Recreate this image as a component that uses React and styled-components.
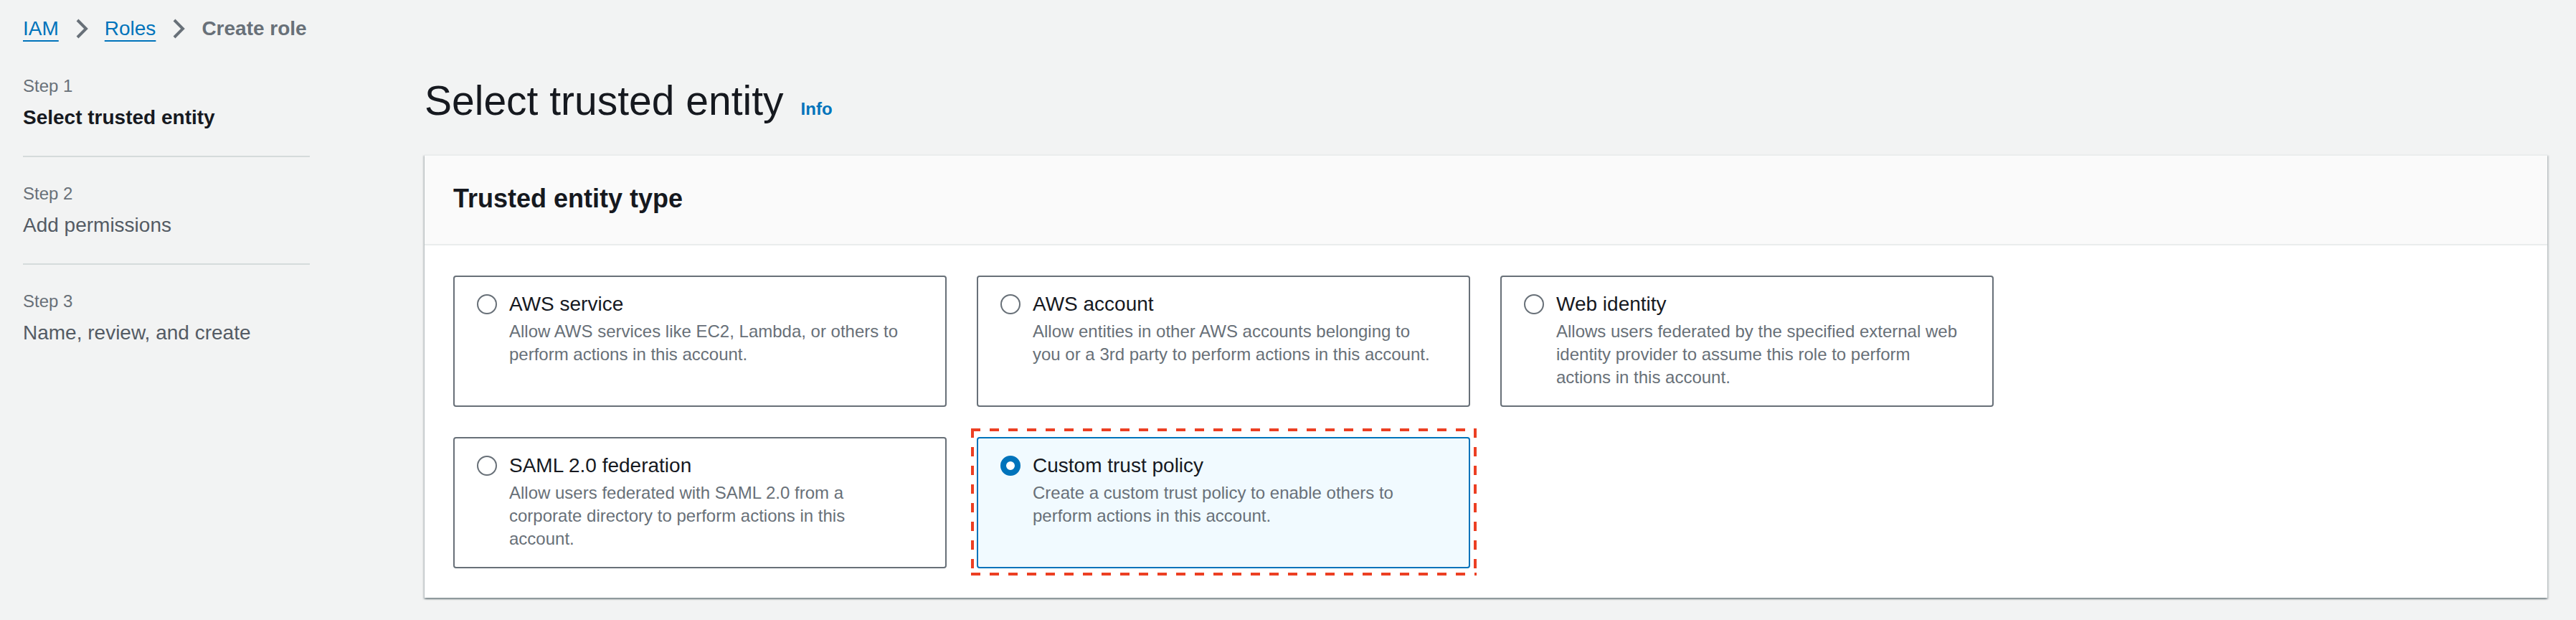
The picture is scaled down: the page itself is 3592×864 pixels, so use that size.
import React from "react";
import styled, { createGlobalStyle } from "styled-components";

const GlobalStyle = createGlobalStyle`
  html, body {
    margin: 0;
    padding: 0;
    background: #f2f3f3;
  }
  body {
    font-family: "Liberation Sans", Arial, sans-serif;
    color: #16191f;
  }
  * {
    box-sizing: border-box;
  }
`;

const Page = styled.div`
  min-height: 864px;
  padding: 20px 40px 0 32px;
`;

const Breadcrumbs = styled.nav`
  display: flex;
  align-items: center;
  height: 40px;
  font-size: 28px;
  line-height: 40px;
`;

const Crumb = styled.a`
  color: #0073bb;
  text-decoration: underline;
  text-decoration-thickness: 2px;
  text-underline-offset: 7px;
  cursor: pointer;
`;

const CurrentCrumb = styled.span`
  color: #687078;
  font-weight: 700;
`;

const ChevronIcon = styled.svg`
  flex: none;
  margin: 0 22px;
`;

const Layout = styled.div`
  display: grid;
  grid-template-columns: 400px 1fr;
  column-gap: 160px;
  margin-top: 44px;
`;

const Steps = styled.ol`
  list-style: none;
  margin: 0;
  padding: 0;
`;

const Step = styled.li`
  & + & {
    margin-top: 33px;
    padding-top: 35px;
    border-top: 2px solid #d5dbdb;
  }
`;

const StepLabel = styled.div`
  font-size: 24px;
  line-height: 32px;
  color: #687078;
`;

const StepName = styled.div`
  margin-top: 8px;
  font-size: 28px;
  line-height: 40px;
  font-weight: ${(p) => (p.$active ? 700 : 400)};
  color: ${(p) => (p.$active ? "#16191f" : "#545b64")};
`;

const Main = styled.main`
  min-width: 0;
`;

const Title = styled.h1`
  margin: 0 0 39px;
  font-size: 57px;
  line-height: 72px;
  font-weight: 400;
  color: #16191f;
`;

const InfoLink = styled.a`
  margin-left: 24px;
  font-size: 24px;
  line-height: 32px;
  font-weight: 700;
  color: #0073bb;
  text-decoration: none;
  cursor: pointer;
`;

const Panel = styled.section`
  background: #fff;
  border-top: 2px solid #eaeded;
  box-shadow: 0 2px 2px 0 rgba(0, 28, 36, 0.3),
    2px 2px 2px 0 rgba(0, 28, 36, 0.15), -2px 2px 2px 0 rgba(0, 28, 36, 0.15);
`;

const PanelHeader = styled.div`
  background: #fafafa;
  padding: 36px 40px 39px;
  border-bottom: 2px solid #eaeded;
`;

const PanelTitle = styled.h2`
  margin: 0;
  font-size: 36px;
  line-height: 48px;
  font-weight: 700;
  color: #16191f;
`;

const PanelBody = styled.div`
  padding: 42px 40px 41px;
`;

const TileGrid = styled.div`
  display: grid;
  grid-template-columns: repeat(3, 688px);
  gap: 42px;
`;

const dash = (dir) =>
  `repeating-linear-gradient(${dir}, #ec3f23 0 13px, transparent 13px 26px)`;

const Tile = styled.label`
  position: relative;
  display: flex;
  gap: 17px;
  padding: 18px 46px 23px 31px;
  border: 2px solid ${(p) => (p.$selected ? "#0073bb" : "#687078")};
  border-radius: 4px;
  background: ${(p) => (p.$selected ? "#f1faff" : "#fff")};
  cursor: pointer;

  ${(p) =>
    p.$highlight &&
    `
    &::after {
      content: "";
      position: absolute;
      top: -14px;
      left: -10px;
      right: -11px;
      bottom: -12px;
      background:
        ${dash("90deg")} left top / 100% 4px no-repeat,
        ${dash("90deg")} left bottom / 100% 4px no-repeat,
        ${dash("180deg")} left top / 4px 100% no-repeat,
        ${dash("180deg")} right top / 4px 100% no-repeat;
      pointer-events: none;
    }
  `}
`;

const Radio = styled.span`
  flex: none;
  width: 28px;
  height: 28px;
  margin-top: 6px;
  border-radius: 50%;
  background: #fff;
  border: ${(p) => (p.$checked ? "8.5px solid #0073bb" : "2.5px solid #687078")};
`;

const TileText = styled.div`
  flex: 1;
  min-width: 0;
`;

const TileTitle = styled.div`
  font-size: 28px;
  line-height: 40px;
  color: #16191f;
`;

const TileDesc = styled.div`
  margin-top: 2px;
  font-size: 24px;
  line-height: 32px;
  color: #687078;
`;

const Chevron = () => (
  <ChevronIcon width="20" height="28" viewBox="0 0 20 28">
    <polyline
      points="4,2 16,14 4,26"
      fill="none"
      stroke="#687078"
      strokeWidth="4"
      strokeLinejoin="miter"
    />
  </ChevronIcon>
);

const steps = [
  { label: "Step 1", name: "Select trusted entity", active: true },
  { label: "Step 2", name: "Add permissions" },
  { label: "Step 3", name: "Name, review, and create" },
];

const entityTypes = [
  {
    title: "AWS service",
    desc: "Allow AWS services like EC2, Lambda, or others to perform actions in this account.",
  },
  {
    title: "AWS account",
    desc: "Allow entities in other AWS accounts belonging to you or a 3rd party to perform actions in this account.",
  },
  {
    title: "Web identity",
    desc: "Allows users federated by the specified external web identity provider to assume this role to perform actions in this account.",
  },
  {
    title: "SAML 2.0 federation",
    desc: "Allow users federated with SAML 2.0 from a corporate directory to perform actions in this account.",
  },
  {
    title: "Custom trust policy",
    desc: "Create a custom trust policy to enable others to perform actions in this account.",
    selected: true,
  },
];

const App = () => {
  return (
    <Page>
      <GlobalStyle />
      <Breadcrumbs>
        <Crumb>IAM</Crumb>
        <Chevron />
        <Crumb>Roles</Crumb>
        <Chevron />
        <CurrentCrumb>Create role</CurrentCrumb>
      </Breadcrumbs>

      <Layout>
        <Steps>
          {steps.map((s) => (
            <Step key={s.label}>
              <StepLabel>{s.label}</StepLabel>
              <StepName $active={s.active}>{s.name}</StepName>
            </Step>
          ))}
        </Steps>

        <Main>
          <Title>
            Select trusted entity
            <InfoLink>Info</InfoLink>
          </Title>

          <Panel>
            <PanelHeader>
              <PanelTitle>Trusted entity type</PanelTitle>
            </PanelHeader>
            <PanelBody>
              <TileGrid>
                {entityTypes.map((t) => (
                  <Tile key={t.title} $selected={t.selected} $highlight={t.selected}>
                    <Radio $checked={t.selected} />
                    <TileText>
                      <TileTitle>{t.title}</TileTitle>
                      <TileDesc>{t.desc}</TileDesc>
                    </TileText>
                  </Tile>
                ))}
              </TileGrid>
            </PanelBody>
          </Panel>
        </Main>
      </Layout>
    </Page>
  );
};

export default App;
